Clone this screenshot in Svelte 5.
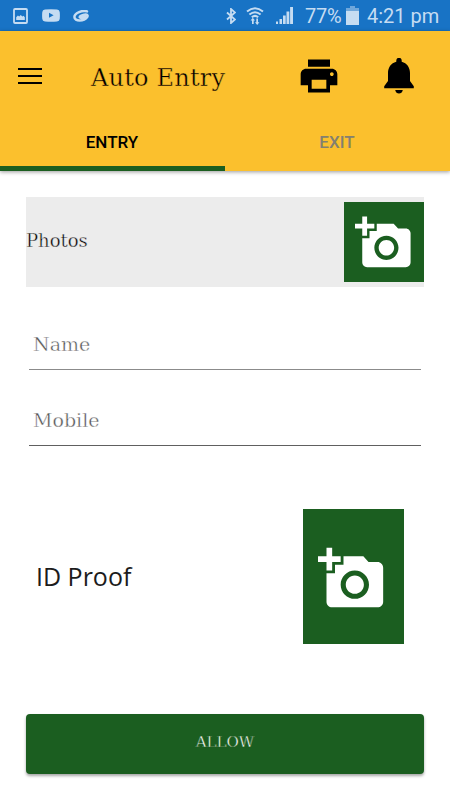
<script>
    let tab = $state('entry')
    let name = $state('')
    let mobile = $state('')
</script>

{#snippet camera()}
    <svg class="camera" viewBox="0 0 24 24">
        <path d="M3 4V1h2v3h3v2H5v3H3V6H0V4h3zm3 6V7h3V4h7l1.83 2H21c1.1 0 2 .9 2 2v12c0 1.1-.9 2-2 2H5c-1.1 0-2-.9-2-2V10h3zm7 9c2.76 0 5-2.24 5-5s-2.24-5-5-5-5 2.24-5 5 2.24 5 5 5zm-3.2-5c0 1.77 1.43 3.2 3.2 3.2s3.2-1.43 3.2-3.2-1.43-3.2-3.2-3.2-3.2 1.43-3.2 3.2z" />
    </svg>
{/snippet}

<div class="screen">
    <div class="status">
        <svg class="picture" viewBox="0 0 15 16">
            <rect x="1" y="1" width="13" height="14" rx="1" fill="none" stroke="currentColor" stroke-width="1.8" />
            <path d="M3.2 12V9.200l1.700-1.600 1.300.9 1.500-1.400 1.700 1.400 1.100-.7 1.300 1.400V12z" />
        </svg>
        <svg class="video" viewBox="0 0 18 13">
            <path fill-rule="evenodd" d="M3 .5Q9-.2 15 .5q2.5.2 2.7 2.5.4 3.500 0 7-.2 2.300-2.700 2.500-6 .7-12 0Q.5 12.300.3 10q-.4-3.500 0-7Q.5.7 3 .5zM7 3.800v5l4.600-2.500z" />
        </svg>
        <svg class="swirl" viewBox="0 0 17 12">
            <path d="M14 1.400C9.500-.2 1.400 3 1.400 7c0 4.600 9.600 4.500 12.800 0 1.400-2.300-1.300-3-4.200-2C7.700 5.600 6 7 7 7.500c1 .6 3.200.2 5-.9" fill="none" stroke="currentColor" stroke-width="2.500" stroke-linecap="round" />
        </svg>
        <span class="gap"></span>
        <svg class="bluetooth" viewBox="0 0 10 16">
            <path d="M1 4.500l8 7L5 15V1l4 3.500-8 7" fill="none" stroke="currentColor" stroke-width="1.800" />
        </svg>
        <svg class="wifi" viewBox="0 0 18 18">
            <g fill="none" stroke="currentColor" stroke-width="2">
                <path d="M1 4.500q8-6.500 16 0" />
                <path d="M3.400 7.500q5.600-4.500 11.200 0" />
                <path d="M5.800 10.200q3.200-2.600 6.400 0" />
            </g>
            <path d="M6.800 10.700l2.200 2.800H7.700V17H6v-3.500H4.600zM11.200 18l2.200-2.800H12v-3.700h-1.700v3.700H9z" />
        </svg>
        <svg class="signal" viewBox="0 0 17 17">
            <path d="M0 14.500h2V17H0zM3.500 12H6v5H3.500zM7 8.500h2.700V17H7zM10.500 4.500h2.800V17h-2.800zM14.100 0H17v17h-2.900z" />
        </svg>
        <span class="percent">77%</span>
        <svg class="battery" viewBox="0 0 13 19">
            <path d="M4 0h5v2h4v4H0V2h4z" opacity=".5" />
            <path d="M0 5h13v14H0z" />
        </svg>
        <span class="time">4:21 pm</span>
    </div>

    <header>
        <div class="toolbar">
            <button class="menu" aria-label="Menu">
                <i></i><i></i><i></i>
            </button>
            <h1 class="slab">Auto Entry</h1>
            <button aria-label="Print">
                <svg class="print" viewBox="0 0 24 24">
                    <path d="M19 8H5c-1.660 0-3 1.340-3 3v6h4v4h12v-4h4v-6c0-1.660-1.340-3-3-3zm-3 11H8v-5h8v5zm3-7c-.55 0-1-.45-1-1s.45-1 1-1 1 .45 1 1-.45 1-1 1zm-1-9H6v4h12V3z" />
                </svg>
            </button>
            <button aria-label="Notifications">
                <svg class="bell" viewBox="0 0 30 36">
                    <path d="M12.300 2.500a2.700 2.700 0 0 1 5.400 0v1.200C23 5 26 9.500 26 15v8l3.800 5.200v2.100H.2v-2.100L4 23v-8C4 9.500 7 5 12.300 3.700zM11.200 32h7.600c-.4 2.300-2 3.600-3.800 3.600s-3.400-1.300-3.800-3.600z" />
                </svg>
            </button>
        </div>
        <nav>
            <button class:active={tab === 'entry'} onclick={() => tab = 'entry'}>ENTRY</button>
            <button class:active={tab === 'exit'} onclick={() => tab = 'exit'}>EXIT</button>
        </nav>
    </header>

    <main>
        <div class="photos">
            <span class="slab">Photos</span>
            <button class="shot" aria-label="Add photo">{@render camera()}</button>
        </div>

        <input class="slab" placeholder="Name" bind:value={name} />
        <input class="slab dark" placeholder="Mobile" bind:value={mobile} />

        <div class="proof">
            <span>ID Proof</span>
            <button class="shot" aria-label="Add ID proof">{@render camera()}</button>
        </div>

        <button class="allow slab">ALLOW</button>
    </main>
</div>

<style>
    :global(body){
        margin: 0;
    }
    .screen{
        width: 450px;
        height: 800px;
        display: flex;
        flex-direction: column;
        background: #fff;
        overflow: hidden;
    }
    button{
        border: 0;
        padding: 0;
        background: none;
        display: flex;
        flex-shrink: 0;
    }
    svg{
        display: block;
        fill: currentColor;
        flex-shrink: 0;
    }
    /* the outline takes the surface colour, so the serif face reads as a light slab */
    .slab{
        font-family: "DejaVu Serif", serif;
        font-weight: 400;
        paint-order: fill stroke;
        -webkit-text-stroke: .4px var(--surface);
    }

    .status{
        height: 31px;
        box-sizing: border-box;
        padding: 0 11px 0 13px;
        display: flex;
        align-items: center;
        background: #1873c5;
        color: #c5dcf2;
        font: 20px/31px Roboto, sans-serif;
    }
    .picture{
        width: 15px;
        height: 16px;
    }
    .video{
        width: 18px;
        height: 13px;
        margin-left: 14px;
    }
    .swirl{
        width: 17px;
        height: 12px;
        margin-left: 13px;
    }
    .gap{
        flex: 1;
    }
    .bluetooth{
        width: 10px;
        height: 16px;
    }
    .wifi{
        width: 18px;
        height: 18px;
        margin-left: 10px;
    }
    .signal{
        width: 17px;
        height: 17px;
        margin-left: 12px;
    }
    .percent{
        margin-left: 12px;
        width: 38px;
        padding-top: 2px;
        letter-spacing: -.3px;
    }
    .battery{
        width: 13px;
        height: 19px;
        margin: 0 8px 0 3px;
    }
    .time{
        width: 72px;
        padding-top: 2px;
        white-space: nowrap;
    }

    header{
        --surface: #fbc02d;
        height: 140px;
        flex-shrink: 0;
        display: flex;
        flex-direction: column;
        background: #fbc02d;
        box-shadow: 0 1px 4px rgba(0, 0, 0, .4);
        color: #000;
    }
    .toolbar{
        height: 90px;
        padding: 0 36px 0 18px;
        display: flex;
        align-items: center;
    }
    .menu{
        width: 24px;
        flex-direction: column;
        gap: 5px;
    }
    .menu i{
        height: 2px;
        background: #000;
    }
    h1{
        flex: 1;
        margin: 3px 0 0 49px;
        font-size: 24px;
        letter-spacing: .2px;
        white-space: nowrap;
    }
    .print{
        width: 44px;
        height: 44px;
    }
    .bell{
        width: 30px;
        height: 36px;
        margin-left: 43px;
    }
    nav{
        flex: 1;
        display: flex;
    }
    nav button{
        flex: 1;
        justify-content: center;
        padding: 11px 1px 0 0;
        box-sizing: border-box;
        border-bottom: 5px solid transparent;
        font: 500 17px/20px Roboto, sans-serif;
        color: #84806f;
    }
    nav .active{
        color: #000;
        border-color: #1b5e20;
    }

    main{
        --surface: #fff;
        flex: 1;
        display: flex;
        flex-direction: column;
        padding: 26px;
    }
    .shot{
        box-sizing: border-box;
        background: #1b5e20;
        color: #fff;
    }
    .photos{
        --surface: #ececec;
        height: 90px;
        display: flex;
        align-items: center;
        justify-content: space-between;
        background: #ececec;
        font-size: 18px;
        color: #000;
    }
    .photos span{
        margin-bottom: 4px;
    }
    .photos .shot{
        width: 80px;
        height: 80px;
        padding: 12px 0 0 11px;
    }
    .photos .camera{
        width: 58px;
        height: 58px;
    }
    input{
        height: 51px;
        margin: 32px 3px 0;
        padding: 0 4px;
        box-sizing: border-box;
        border: 0;
        border-bottom: 1px solid #8b8b8b;
        border-radius: 0;
        outline: 0;
        background: none;
        font-size: 19px;
        color: #222;
    }
    input::placeholder{
        color: #555;
        opacity: 1;
    }
    input.dark{
        margin-top: 25px;
        border-color: #606060;
    }
    .proof{
        margin-top: 63px;
        padding: 0 20px 0 10px;
        display: flex;
        align-items: center;
        justify-content: space-between;
        font: 25px "Open Sans", sans-serif;
        color: #1c1c1c;
    }
    .proof span{
        margin-bottom: 2px;
    }
    .proof .shot{
        width: 101px;
        height: 135px;
        padding: 36px 0 0 15px;
    }
    .proof .camera{
        width: 68px;
        height: 68px;
    }
    .allow{
        --surface: #1b5e20;
        height: 60px;
        margin-top: auto;
        padding-bottom: 4px;
        align-items: center;
        justify-content: center;
        border-radius: 4px;
        background: #1b5e20;
        box-shadow: 0 2px 3px rgba(0, 0, 0, .35);
        font-size: 15px;
        color: #fff;
    }
</style>
